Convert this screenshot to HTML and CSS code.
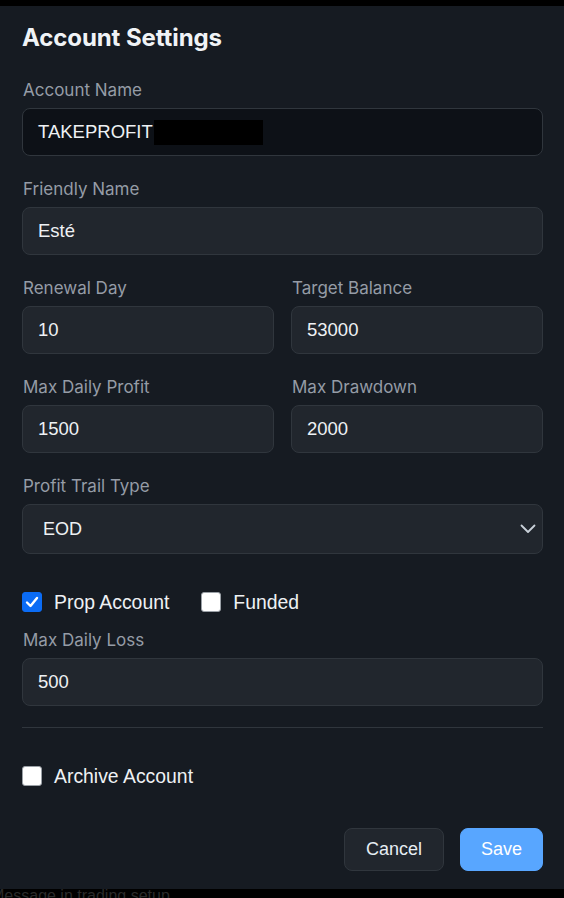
FILE: index.html
```html
<!DOCTYPE html>
<html lang="en">
<head>
<meta charset="utf-8">
<title>Account Settings</title>
<link rel="stylesheet" href="styles.css">
</head>
<body>
<div class="panel">
  <h2 class="title">Account Settings</h2>

  <div class="field">
    <label class="label">Account Name</label>
    <div class="input input-dark"><span>TAKEPROFIT</span><span class="redact"></span></div>
  </div>

  <div class="field">
    <label class="label">Friendly Name</label>
    <div class="input">Esté</div>
  </div>

  <div class="grid">
    <div class="field">
      <label class="label">Renewal Day</label>
      <div class="input">10</div>
    </div>
    <div class="field">
      <label class="label">Target Balance</label>
      <div class="input">53000</div>
    </div>
  </div>

  <div class="grid">
    <div class="field">
      <label class="label">Max Daily Profit</label>
      <div class="input">1500</div>
    </div>
    <div class="field">
      <label class="label">Max Drawdown</label>
      <div class="input">2000</div>
    </div>
  </div>

  <div class="field">
    <label class="label">Profit Trail Type</label>
    <div class="input select">
      <span>EOD</span>
      <svg class="chevron" width="16" height="10" viewBox="0 0 16 10"><path d="M1.5 1.5 L8 8 L14.5 1.5" fill="none" stroke="#c9d1d9" stroke-width="1.8" stroke-linecap="round" stroke-linejoin="round"/></svg>
    </div>
  </div>

  <div class="checks">
    <label class="check">
      <span class="box checked"><svg width="14" height="12" viewBox="0 0 14 12"><path d="M2 6.5 L5.5 10 L12 2" fill="none" stroke="#fff" stroke-width="2.4" stroke-linecap="round" stroke-linejoin="round"/></svg></span>
      <span>Prop Account</span>
    </label>
    <label class="check">
      <span class="box"></span>
      <span>Funded</span>
    </label>
  </div>

  <div class="field field-loss">
    <label class="label">Max Daily Loss</label>
    <div class="input">500</div>
  </div>

  <hr class="divider">

  <label class="check archive">
    <span class="box"></span>
    <span>Archive Account</span>
  </label>

  <div class="actions">
    <button class="btn btn-cancel">Cancel</button>
    <button class="btn btn-save">Save</button>
  </div>
</div>
<div class="behind">Message in trading setup</div>
</body>
</html>
```

FILE: styles.css
```css
html, body {
  margin: 0;
  padding: 0;
  background: #000;
  overflow: hidden;
  height: 898px;
}

.panel {
  position: relative;
  z-index: 1;
  margin-top: 6px;
  height: 883px;
  box-sizing: border-box;
  background: #161b22;
  padding: 18px 21px 0 22px;
  font-family: Inter, "Liberation Sans", sans-serif;
  color: #e6edf3;
}

.title {
  margin: 0 0 28px 0;
  font-size: 24px;
  line-height: 28px;
  font-weight: 700;
  color: #f0f3f6;
  letter-spacing: -0.1px;
}

.field {
  display: flex;
  flex-direction: column;
  margin-bottom: 23px;
}

.label {
  font-size: 17px;
  line-height: 20px;
  color: #959ca6;
  margin-bottom: 8px;
  padding-left: 1px;
}

.input {
  height: 48px;
  box-sizing: border-box;
  border: 1px solid #30363d;
  border-radius: 8px;
  background: #21262d;
  display: flex;
  align-items: center;
  padding: 0 15px;
  font-family: "Liberation Sans", Arial, sans-serif;
  font-size: 18.5px;
  color: #eef1f4;
}

.input-dark {
  background: #0d1117;
}

.redact {
  display: inline-block;
  width: 109px;
  height: 25px;
  background: #000;
  margin-left: 1px;
}

.grid {
  display: grid;
  grid-template-columns: 1fr 1fr;
  column-gap: 17px;
}

.select {
  height: 50px;
  justify-content: space-between;
  padding: 0 6px 0 20px;
  font-size: 18px;
}

.chevron {
  display: block;
}

.checks {
  display: flex;
  align-items: center;
  gap: 32px;
  margin-top: 38px;
  margin-bottom: 18px;
}

.check {
  display: flex;
  align-items: center;
  gap: 12px;
  font-family: "Liberation Sans", Arial, sans-serif;
  font-size: 19.4px;
  line-height: 20px;
  color: #eef1f4;
}

.box {
  width: 20px;
  height: 20px;
  box-sizing: border-box;
  border-radius: 3px;
  background: #fff;
  border: 1px solid #9aa0a6;
  display: flex;
  align-items: center;
  justify-content: center;
}

.box.checked {
  background: #0b6cf5;
  border-color: #0b6cf5;
}

.field-loss {
  margin-bottom: 21px;
}

.divider {
  border: 0;
  border-top: 1px solid #30363d;
  margin: 0;
}

.archive {
  margin-top: 38px;
}

.actions {
  display: flex;
  justify-content: flex-end;
  gap: 16px;
  margin-top: 42px;
}

.btn {
  height: 43px;
  border-radius: 8px;
  font-family: "Liberation Sans", Arial, sans-serif;
  font-size: 18px;
  box-sizing: border-box;
  cursor: pointer;
}

.btn-cancel {
  width: 100px;
  background: #21262d;
  border: 1px solid #30363d;
  color: #e6edf3;
}

.btn-save {
  width: 83px;
  background: #58a6ff;
  border: 1px solid #58a6ff;
  color: #fff;
  font-weight: 500;
}

.behind {
  font-family: "Liberation Sans", Arial, sans-serif;
  font-size: 16px;
  line-height: 18px;
  color: #2b2b2b;
  text-indent: -9px;
  margin-top: -2px;
  white-space: nowrap;
}
```
